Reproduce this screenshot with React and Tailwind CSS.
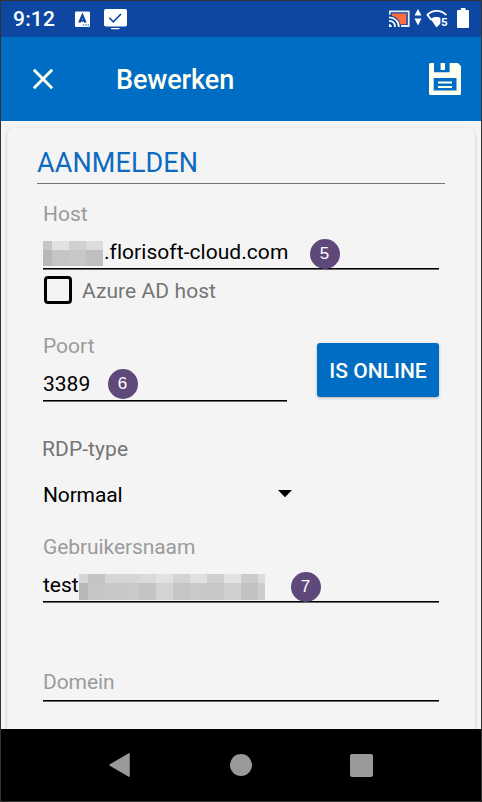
import React from "react";

const hostTop = ["#c6c6c6", "#e2e2e2", "#d0d0d0", "#dcdcdc"];
const hostBottom = ["#b8b8b8", "#c5c5c5", "#c7c7c7", "#bfbfbf"];
const userTop = ["#d6d6d6", "#c3c3c3", "#d6d6d6", "#d6d6d6", "#dbdbdb", "#e2e2e2", "#d4d4d4", "#e0e0e0", "#d0d0d0", "#e3e3e3", "#cccccc", "#dcdcdc"];
const userBottom = ["#b8b8b8", "#c6c6c6", "#c8c8c8", "#c9c9c9", "#c3c3c3", "#d3d3d3", "#c6c6c6", "#c9c9c9", "#c7c7c7", "#d0d0d0", "#c2c2c2", "#cccccc"];

function MaskRow({ colors, className }) {
  return (
    <div className={`flex ${className}`}>
      {colors.map((c, i) => (
        <span key={i} className="w-[17px] shrink-0 first:w-[9px] last:shrink" style={{ background: c }} />
      ))}
    </div>
  );
}

function Mask({ top, bottom, className }) {
  return (
    <div className={`overflow-hidden ${className}`}>
      <MaskRow colors={top} className="h-[9px]" />
      <MaskRow colors={bottom} className="h-[17px]" />
    </div>
  );
}

function Badge({ children, className }) {
  return (
    <span className={`absolute flex size-[30px] items-center justify-center rounded-full bg-[#5f497a] pb-px font-['Liberation_Sans',sans-serif] text-[17px] leading-none text-white ${className}`}>
      {children}
    </span>
  );
}

const line = "border-b border-[#666] after:block after:h-px after:bg-black";

export default function App() {
  return (
    <div className="flex h-[802px] w-[482px] flex-col overflow-hidden border border-[#333] bg-[#f4f4f4] font-['Roboto',sans-serif] text-[21px] leading-6 text-black">
      <div className="flex h-9 shrink-0 bg-[#0d47a1] text-white">
        <span className="ml-3 mt-[6px] w-[62px] text-[21px] font-medium leading-6 tracking-[0.2px]">9:12</span>
        <svg className="mt-[10px]" width="15" height="16" viewBox="0 0 15 16">
          <rect x="0" y="0.400" width="15" height="15.600" rx="1.300" fill="#fff" />
          <path d="M4.300 11.600 7.400 4.400l3.100 7.200M5.400 9.600h4" fill="none" stroke="#0d47a1" strokeWidth="2.200" />
          <path d="M8 14h1.300M10.400 14h1.300M12.600 14h1.300" stroke="#0d47a1" strokeWidth="1.200" />
        </svg>
        <svg className="ml-[14px] mt-2" width="24" height="21" viewBox="0 0 24 21">
          <rect x="0" y="0" width="23" height="17.600" rx="1.800" fill="#fff" />
          <path d="M7.500 19.600h7.500" stroke="#fff" strokeWidth="1.300" strokeLinecap="round" />
          <path d="m5.300 8.800 4 4L17 5" fill="none" stroke="#0d47a1" strokeWidth="1.600" />
        </svg>
        <svg className="ml-auto mt-[9px]" width="22" height="18" viewBox="0 0 22 18">
          <path d="M3 3.500h14.300v10.700h-6.300C10.500 10 7.700 6.600 3 6z" fill="#ff6e40" />
          <path d="M.8 4.800V1.300h18.900v14.700H12" fill="none" stroke="#e8edf8" strokeWidth="1.800" />
          <path d="M0 7.300c5.600 0 9.800 4 9.800 9.600M0 10.900c3.700 0 6 2.400 6 6" fill="none" stroke="#fff" strokeWidth="1.700" />
          <path d="M0 14c1.700 0 2.800 1.100 2.800 2.900H0z" fill="#fff" />
        </svg>
        <svg className="ml-[3px] mt-2" width="8" height="17" viewBox="0 0 8 17">
          <path d="M4 0 7.500 6.600H.5zM4 16.500.5 9.600h7z" fill="#fff" />
        </svg>
        <svg className="ml-1 mt-2" width="23" height="19" viewBox="0 0 23 19">
          <path d="M1 6C6.800.4 14.600.4 20.400 6M1.200 5.600l4.400 5.600" fill="none" stroke="#fff" strokeWidth="1.800" />
          <path d="M4.700 9.900c3-2.400 7.500-2.500 10.300-.5v4.500L10.400 18.400z" fill="#fff" />
          <path d="M14.400 8.200h8.400v10.800h-7.400l-1-3z" fill="#0d47a1" />
          <text x="14.900" y="16.600" fontSize="11.500" fontWeight="700" fill="#fff" fontFamily="Roboto">5</text>
        </svg>
        <svg className="ml-[8px] mr-[12px] mt-[7px]" width="12" height="20" viewBox="0 0 12 20">
          <path d="M1 2h2.800V0h4.700v2H11a1 1 0 0 1 1 1v16a1 1 0 0 1-1 1H1a1 1 0 0 1-1-1V3a1 1 0 0 1 1-1z" fill="#fff" />
        </svg>
      </div>

      <div className="flex h-[84px] shrink-0 items-center bg-[#006dc4] text-[#fffff0]">
        <svg className="ml-[31px]" width="22" height="22" viewBox="0 0 22 22">
          <path d="m1.800 1.800 18.400 18.400M20.200 1.800 1.800 20.200" stroke="currentColor" strokeWidth="2.900" />
        </svg>
        <h1 className="ml-[62px] mt-px text-[27px] font-medium leading-8 tracking-[-0.1px]">Bewerken</h1>
        <svg className="ml-auto mr-5" width="32" height="32" viewBox="0 0 32 32">
          <path fillRule="evenodd" d="M1.500 0H5v9.200h15.600V0h8.200L32 3v27.500a1.500 1.500 0 0 1-1.500 1.500h-29A1.500 1.500 0 0 1 0 30.500v-29A1.500 1.500 0 0 1 1.500 0zM4.700 15v12.500h22.800V15z" fill="currentColor" />
          <path d="M11.600 0H16v7h-4.400z" fill="currentColor" />
          <path d="M9 19.400h14M9 23.900h14" stroke="currentColor" strokeWidth="2" />
        </svg>
      </div>

      <div className="flex-1 overflow-hidden px-[6px] pt-[7px]">
        <div className="h-[640px] rounded-[7px] bg-[#f4f4f4] px-[30px] pt-[19px] shadow-[0_1px_3px_rgba(0,0,0,0.25)]">
          <div className="h-[37px] border-b border-[#757575]">
            <h2 className="text-[27px] leading-8 tracking-[0.1px] text-[#0d6abf]">AANMELDEN</h2>
          </div>
          <div className="px-[6px]">
            <label className="mt-[18px] block text-[#9b9b9b]">Host</label>
            <div className={`relative mt-[14px] ${line}`}>
              <div className="flex h-7">
                <Mask top={hostTop} bottom={hostBottom} className="mt-px h-[25px] w-[60px]" />
                <span className="ml-px tracking-[0.050px]">.florisoft-cloud.com</span>
              </div>
              <Badge className="left-[266.500px] top-[-1.500px]">5</Badge>
            </div>
            <div className="flex h-[34px] items-center">
              <span className="ml-px mt-[6px] size-7 rounded-[4px] border-3 border-black" />
              <label className="ml-[10px] mt-[8px] tracking-[0.080px] text-[#757575]">Azure AD host</label>
            </div>
            <div className="flex h-[98px] justify-between">
              <div className="w-[244px]">
                <label className="mt-[30px] block text-[#9b9b9b]">Poort</label>
                <div className={`relative mt-[14px] ${line}`}>
                  <div className="h-7">3389</div>
                  <Badge className="left-[64.500px] top-[-3.500px]">6</Badge>
                </div>
              </div>
              <button className="mt-[39px] h-[54px] w-[122px] shrink-0 rounded-[3px] bg-[#006dc4] pt-[2px] text-[21px] font-medium text-[#fffff8] shadow-[0_1px_3px_rgba(0,0,0,0.25)]">IS ONLINE</button>
            </div>
            <label className="-ml-px mt-[35px] block tracking-[0.080px] text-[#757575]">RDP-type</label>
            <div className="mt-[22px] flex h-6 w-[249px] justify-between">
              <span className="tracking-[-0.150px]">Normaal</span>
              <svg className="mt-[7px]" width="14" height="8" viewBox="0 0 14 8">
                <path d="M0 0h14L7 7.200z" />
              </svg>
            </div>
            <label className="mt-[28px] block tracking-[-0.080px] text-[#9b9b9b]">Gebruikersnaam</label>
            <div className={`relative mt-[14px] ${line}`}>
              <div className="flex h-7">
                <span className="w-9">test</span>
                <Mask top={userTop} bottom={userBottom} className="mt-px h-[26px] w-[186px]" />
              </div>
              <Badge className="left-[247.500px] top-[-1.500px]">7</Badge>
            </div>
            <div className={`mt-[67px] ${line}`}>
              <div className="h-[30px] tracking-[-0.080px] text-[#9b9b9b]">Domein</div>
            </div>
          </div>
        </div>
      </div>

      <div className="flex h-[72px] shrink-0 items-center bg-black">
        <svg className="ml-[108px]" width="22" height="24" viewBox="0 0 22 24">
          <path d="M20 .9v22.200L1.200 12z" fill="#999" stroke="#999" strokeWidth="1.600" strokeLinejoin="round" />
        </svg>
        <span className="ml-[99px] size-[22px] rounded-full bg-[#999]" />
        <span className="ml-[97.500px] size-[23px] rounded-[2px] bg-[#999]" />
      </div>
    </div>
  );
}
